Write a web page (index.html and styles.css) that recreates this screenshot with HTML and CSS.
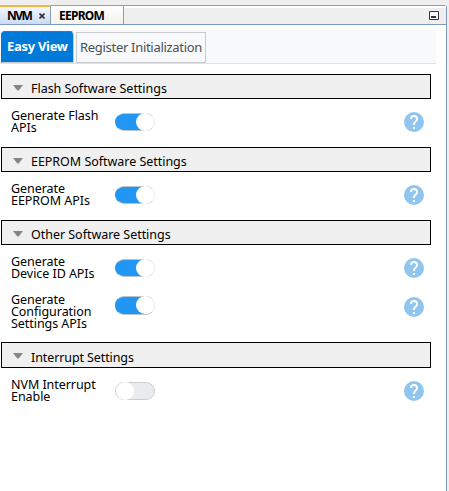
FILE: index.html
```
<!DOCTYPE html>
<html lang="en">
<head>
<meta charset="utf-8">
<title>NVM</title>
<link rel="stylesheet" href="styles.css">
</head>
<body>
<svg class="defs" width="0" height="0">
  <symbol id="help" viewBox="0 0 24 24"><path fill="#90c5f0" d="M12 2a10 10 0 1 0 0 20 10 10 0 0 0 0-20zm1 17h-2v-2h2v2zm2.07-7.75-.9.92C13.45 12.9 13 13.5 13 15h-2v-.5c0-1.1.45-2.1 1.17-2.83l1.24-1.26A2 2 0 1 0 10 9H8a4 4 0 1 1 8 0c0 .88-.36 1.68-.93 2.25z"/></symbol>
  <symbol id="caret" viewBox="0 0 10 6"><path fill="#858585" d="M0 0h10L5.6 5.6H4.4z"/></symbol>
</svg>
<div class="window">
  <header class="tabs">
    <div class="tab active"><span class="w-nvm">NVM</span><svg width="6" height="6" viewBox="0 0 6 6"><path d="M.5.5l5 5m0-5l-5 5" stroke="#333" stroke-width="1.6"/></svg></div>
    <div class="tab"><span class="w-eeprom">EEPROM</span></div>
    <svg class="minimize" width="10" height="9" viewBox="0 0 10 9"><path d="M.5.5h9v8h-9z" fill="#fff" stroke="#34343f"/><path d="M2 5h5v2H2z" fill="#34343f"/></svg>
  </header>
  <nav class="views">
    <div class="view selected">Easy View</div>
    <div class="view">Register Initialization</div>
  </nav>
  <main>
    <section>
      <h2><svg class="caret"><use href="#caret"/></svg><span>Flash Software Settings</span></h2>
      <div class="row"><div class="label">Generate Flash<br>APIs</div><i class="toggle on"></i><svg class="help"><use href="#help"/></svg></div>
    </section>
    <section>
      <h2><svg class="caret"><use href="#caret"/></svg><span>EEPROM Software Settings</span></h2>
      <div class="row"><div class="label">Generate<br>EEPROM APIs</div><i class="toggle on"></i><svg class="help"><use href="#help"/></svg></div>
    </section>
    <section>
      <h2><svg class="caret"><use href="#caret"/></svg><span>Other Software Settings</span></h2>
      <div class="row short"><div class="label">Generate<br>Device ID APIs</div><i class="toggle on"></i><svg class="help"><use href="#help"/></svg></div>
      <div class="row tall"><div class="label">Generate<br>Configuration<br>Settings APIs</div><i class="toggle on"></i><svg class="help"><use href="#help"/></svg></div>
    </section>
    <section>
      <h2 class="last"><svg class="caret"><use href="#caret"/></svg><span>Interrupt Settings</span></h2>
      <div class="row"><div class="label">NVM Interrupt<br>Enable</div><i class="toggle"></i><svg class="help"><use href="#help"/></svg></div>
    </section>
  </main>
</div>
</body>
</html>
```
FILE: styles.css
```
* { box-sizing: border-box; }
body { margin: 0; height: 491px; overflow: hidden; background: #efefef; font-family: "Noto Sans", "Open Sans", sans-serif; color: #000; padding-top: 5px; }
.defs { display: none; }
.window { width: 447px; height: 486px; background: #fff; border-right: 1px solid #7f9db9; border-top: 1px solid #8c9fb4; border-top-right-radius: 3px; }
.tabs { height: 19px; background: #efefef; border-top: 2px solid #fff; border-bottom: 1px solid #7a9bc0; display: flex; }
.tab { height: 19px; margin-top: -3px; width: 73px; padding-left: 8px; background: linear-gradient(#fff, #f3f2ec); border-right: 1px solid #8c9fb4; border-top: 1px solid #8c9fb4; font-size: 12px; font-weight: 700; line-height: 20px; white-space: nowrap; display: flex; }
.tab.active { width: 51px; padding-left: 7px; border-top: 2px solid #fbb53b; background: linear-gradient(#f4f7fe, #ccdaf5); line-height: 18px; }
.tab svg { margin: 6px 0 0 8px; }
.tab span { flex: none; }
.w-nvm { width: 24px; letter-spacing: -1.5px; }
.w-eeprom { letter-spacing: -.75px; }
.minimize { margin: 3px 7px 0 auto; }
.views { margin-top: 5px; height: 34px; width: 436px; padding: 1px 0 0 1px; background: #f8f9fb; border-bottom: 1px solid #dee2e6; display: flex; gap: 2px; }
.view { height: 31px; width: 130px; margin-top: 1px; border: 1px solid #c9cbcf; font-size: 13px; letter-spacing: -.3px; line-height: 28px; color: #495057; padding-left: 3px; white-space: nowrap; }
.view.selected { width: 73px; height: 32px; margin-top: 0; background: #007ad9; border-color: #1683db #c9cbcf #c9cbcf #007ad9; border-radius: 4px 4px 0 0; color: #fff; font-weight: 700; line-height: 29px; padding-left: 5px; }
main { padding: 10px 0 0 1px; }
h2 { margin: 0; width: 430px; height: 25px; border: 1px solid #000; background: #f0f0f0; font-size: 12.5px; font-weight: 400; line-height: 28px; letter-spacing: -.03px; display: flex; white-space: nowrap; }
h2.last { height: 26px; line-height: 29px; letter-spacing: -.1px; }
.caret { width: 10px; height: 6px; margin: 10px 8px 0 11px; }
.row { height: 48px; padding: 10px 0 0 10px; display: flex; }
.label { width: 104px; padding-top: 1px; font-size: 12.5px; line-height: 12px; letter-spacing: -.05px; white-space: nowrap; }
.toggle { width: 40px; height: 18px; margin-top: 4px; border-radius: 9px; border: 1px solid #cccfd2; background: #e9ecef; }
.toggle::before { content: ""; display: block; width: 18px; height: 18px; margin: -1px 0 0; border-radius: 50%; background: #fff; }
.toggle.on { background: linear-gradient(90deg, #2196f3 28px, #fff 28px); border-color: #b9c3cc #e9e9e9 #b9c3cc #2196f3; }
.toggle.on::before { margin-left: 20px; }
.help { width: 24px; height: 24px; margin: 1px 0 0 247px; }
.row.short { height: 38px; }
.row.tall { height: 59px; }
.row.tall .toggle { margin-top: 3px; height: 19px; }
.row.tall .help { margin-top: 2px; }
```
